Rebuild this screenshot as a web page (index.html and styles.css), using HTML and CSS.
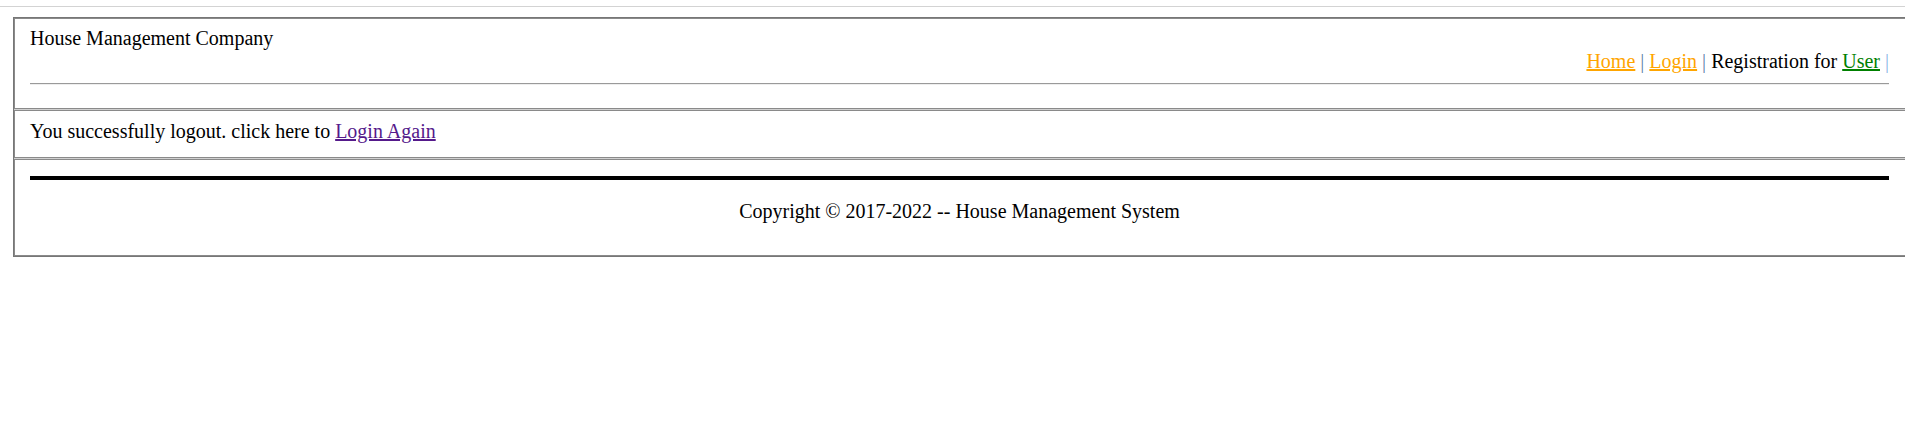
FILE: index.html
```html
<!DOCTYPE html>
<html>
<head>
<meta charset="utf-8">
<title>House Management Company</title>
<link rel="stylesheet" href="styles.css">
</head>
<body>
<div class="topline"></div>
<div class="frame">
  <div class="row head">
    <div class="brand">House Management Company</div>
    <div class="nav"><a href="#" class="orange">Home</a> <span class="sep">|</span> <a href="#" class="orange">Login</a> <span class="sep">|</span> Registration for <a href="#" class="green">User</a> <span class="sep light">|</span></div>
    <div class="rule"></div>
  </div>
  <div class="row msg">
    You successfully logout. click here to <a href="#" class="visited">Login Again</a>
  </div>
  <div class="row foot">
    <div class="bar"></div>
    <div class="copy">Copyright © 2017-2022 -- House Management System</div>
  </div>
</div>
</body>
</html>
```

FILE: styles.css
```css
html, body {
  margin: 0;
  padding: 0;
  overflow: hidden;
  background: #ffffff;
}
body {
  font-family: "Liberation Serif", "Times New Roman", serif;
  font-size: 20px;
  line-height: 23px;
  color: #000000;
  padding-top: 6px;
}
.topline {
  height: 0;
  border-top: 1px solid #d3d3d3;
}
.frame {
  margin-top: 10px;
  margin-left: 13px;
  width: 1920px;
  border: 1px solid #777777;
  background: #d0d0d0;
  display: flex;
  flex-direction: column;
  gap: 1px;
}
.row {
  background: #ffffff;
  border: 1px solid #8a8a8a;
  padding-left: 15px;
  padding-right: 44px;
}
.head {
  padding-top: 8px;
  padding-bottom: 13px;
}
.nav {
  text-align: right;
}
.rule {
  margin-top: 10px;
  margin-bottom: 10px;
  border-top: 1px solid #9a9a9a;
  border-bottom: 1px solid #eeeeee;
}
.msg {
  padding-top: 9px;
  padding-bottom: 14px;
}
.foot {
  padding-top: 16px;
  padding-bottom: 32px;
}
.bar {
  height: 4px;
  background: #000000;
}
.copy {
  margin-top: 20px;
  text-align: center;
}
a {
  text-decoration: underline;
}
.orange { color: #ffa500; }
.green { color: #008000; }
.visited { color: #551a8b; }
.sep { color: #5f80a8; }
.sep.light { color: #8ab6e6; }
```
